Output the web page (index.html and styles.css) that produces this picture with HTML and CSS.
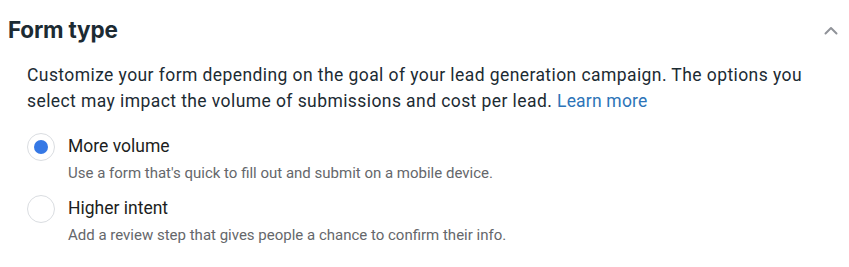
FILE: index.html
```html
<!DOCTYPE html>
<html lang="en">
<head>
<meta charset="utf-8">
<title>Form type</title>
<link rel="stylesheet" href="styles.css">
</head>
<body>
<section class="panel">
  <header class="panel-head">
    <h2 class="panel-title">Form type</h2>
    <button class="collapse" aria-label="Collapse">
      <svg width="14" height="9" viewBox="0 0 14 9"><path d="M1.5 7.5 L7 2 L12.5 7.5" fill="none" stroke="#909399" stroke-width="2" stroke-linecap="round" stroke-linejoin="round"/></svg>
    </button>
  </header>
  <div class="panel-body">
    <p class="desc">Customize your form depending on the goal of your lead generation campaign. The options you select may impact the volume of submissions and cost per lead. <a class="link" href="#">Learn more</a></p>
    <div class="options">
      <label class="option">
        <span class="radio checked"><span class="dot"></span></span>
        <span class="option-text">
          <span class="option-title">More volume</span>
          <span class="option-sub">Use a form that's quick to fill out and submit on a mobile device.</span>
        </span>
      </label>
      <label class="option">
        <span class="radio"></span>
        <span class="option-text">
          <span class="option-title">Higher intent</span>
          <span class="option-sub">Add a review step that gives people a chance to confirm their info.</span>
        </span>
      </label>
    </div>
  </div>
</section>
</body>
</html>
```

FILE: styles.css
```css
* { box-sizing: border-box; }
html, body { margin: 0; padding: 0; background: #ffffff; }
body { font-family: Roboto, "Liberation Sans", Arial, sans-serif; color: #1c1e21; }

.panel { width: 849px; height: 267px; padding: 16px 8px 0 8px; }

.panel-head { display: flex; align-items: center; justify-content: space-between; height: 26px; }
.panel-title { margin: 0; font-family: Inter, Roboto, sans-serif; font-weight: 700; font-size: 22.5px; color: #1c2b33; letter-spacing: -0.2px; }
.collapse { border: 0; background: none; padding: 0; margin-right: 3px; margin-top: 2px; display: flex; align-items: center; }

.panel-body { padding-left: 19px; padding-top: 20px; }

.desc { margin: 0; max-width: 790px; font-size: 17.5px; line-height: 26px; letter-spacing: 0.42px; color: #1c2b33; }
.link { color: #2d74b8; text-decoration: none; letter-spacing: 0.2px; }

.options { display: flex; flex-direction: column; gap: 12px; margin-top: 19px; }
.option { display: flex; align-items: flex-start; gap: 13px; }
.radio { width: 28px; height: 28px; border-radius: 50%; border: 1px solid #dadde1; display: flex; align-items: center; justify-content: center; flex: none; }
.dot { width: 14px; height: 14px; border-radius: 50%; background: #3578e5; }
.option-text { display: flex; flex-direction: column; padding-top: 2px; }
.option-title { font-size: 17.5px; line-height: 22px; color: #1c1e21; }
.option-sub { font-size: 15px; line-height: 20px; color: #65676b; margin-top: 6px; }
```
